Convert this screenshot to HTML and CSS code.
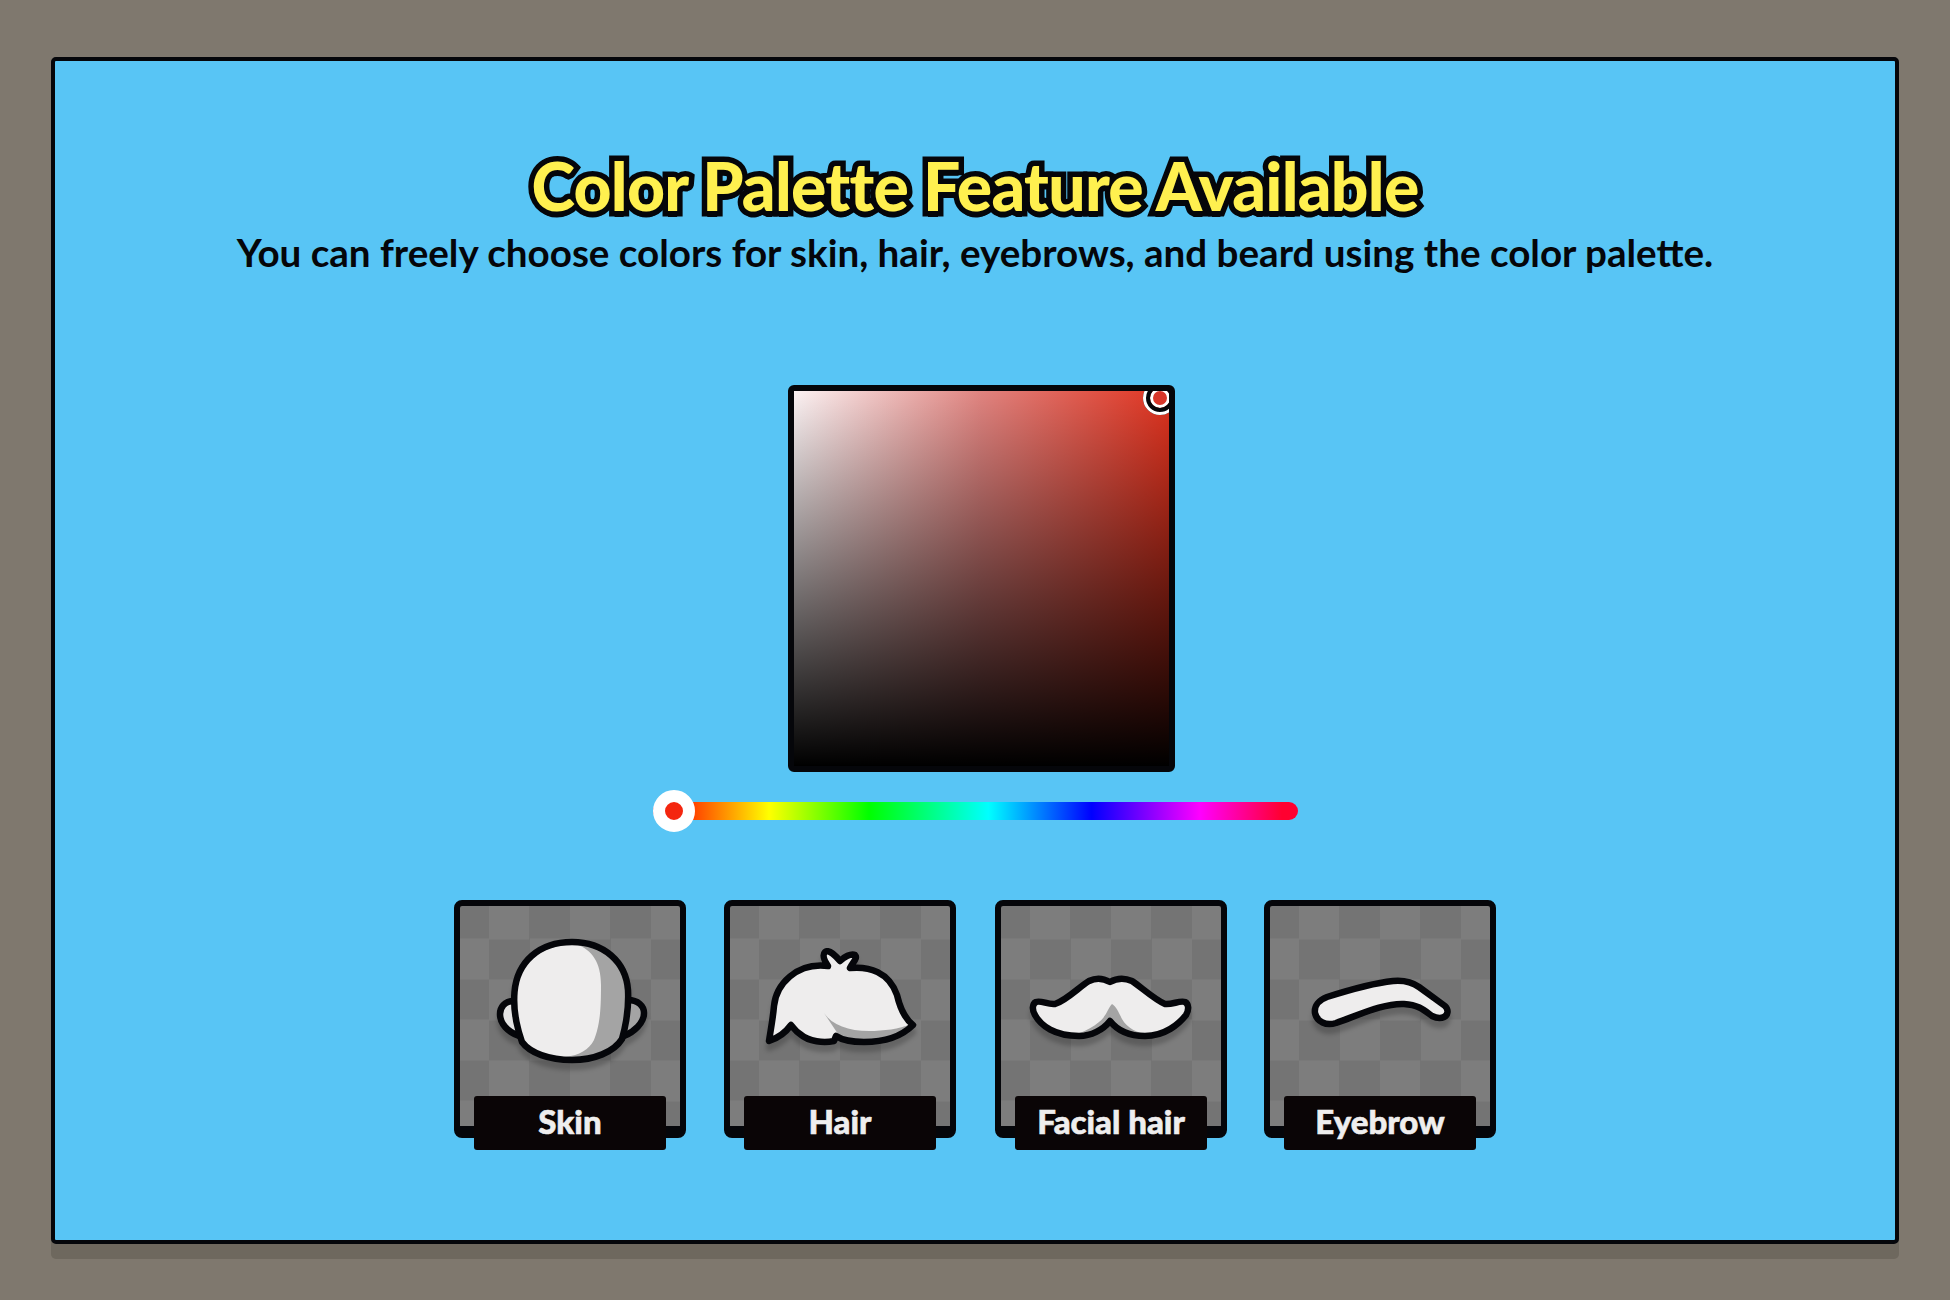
FILE: index.html
```html
<!DOCTYPE html>
<html lang="en">
<head>
  <meta charset="UTF-8">
  <title>Color Palette Feature</title>
  <meta name="viewport" content="width=device-width, initial-scale=1.0">
  <link rel="stylesheet" href="styles.css">
</head>
<body>
  <div class="frameShadow">
    <div class="frame">
      <h1 class="title">Color Palette Feature Available</h1>
      <p class="subtitle">You can freely choose colors for skin, hair, eyebrows, and beard using the color palette.</p>

      <div class="palette">
        <div class="paletteArea">
          <span class="picker"></span>
        </div>
      </div>

      <div class="hueSlider">
        <span class="hueKnob"></span>
      </div>

      <div class="cards">
        <div class="card">
          <svg class="partIcon" viewBox="6 6 220 220">
            <path class="gray earLight" d="M60 101C50 101 46 108 46 114C46 124 54 132 65 136"/>
            <path class="gray" d="M174 100C184 100 190 106 190 113C190 123 180 132 170 136"/>
            <path class="gray noLine" d="M118 42C150 42 172 62 174 90C175 110 172 125 168 139C160 152 140 160 118 160C95 160 76 153 68 142C62 125 59 110 60.5 92C63 62 85 42 118 42Z"/>
            <path class="light" d="M62 92C64 62 90 44 122 44C138 50 147 62 147 85C147 110 146 125 140 140C135 150 125 155 112 157C92 157 78 152 70 141C64 125 60 110 62 92Z"/>
            <path class="line" d="M118 42C150 42 172 62 174 90C175 110 172 125 168 139C160 152 140 160 118 160C95 160 76 153 68 142C62 125 59 110 60.5 92C63 62 85 42 118 42Z"/>
          </svg>
          <div class="cardLabel">Skin</div>
        </div>

        <div class="card">
          <svg class="partIcon" viewBox="6 6 220 220">
            <path class="light noLine" d="M104 66C100 60 98 55 101 52C105 49 112 56 116 61C120 57 127 53 131 55C134 58 129 62 126 68C145 66 165 72 173 95C176 108 180 118 189 125C178 136 160 142 140 142C128 142 118 140 112 136L110 141C100 143 85 142 76 134C72 132 70 128 67 125C62 132 54 138 45 141C47 128 49 118 50 106C52 85 72 62 104 66Z"/>
            <path class="gray noLine" d="M100 113C108 125 125 131 145 131C160 131 175 129 187 124L178 134L140 141L116 137Z"/>
            <path class="gray noLine" d="M67 121C62 129 54 135 47 139L60 136Z"/>
            <path class="line" d="M104 66C100 60 98 55 101 52C105 49 112 56 116 61C120 57 127 53 131 55C134 58 129 62 126 68C145 66 165 72 173 95C176 108 180 118 189 125C178 136 160 142 140 142C128 142 118 140 112 136L110 141C100 143 85 142 76 134C72 132 70 128 67 125C62 132 54 138 45 141C47 128 49 118 50 106C52 85 72 62 104 66Z"/>
          </svg>
          <div class="cardLabel">Hair</div>
        </div>

        <div class="card">
          <svg class="partIcon" viewBox="6 6 220 220">
            <path class="light noLine" d="M115 82C108 78 100 78 94 81C84 87 72 100 60 104C53 105 46 100 41 102C37 104 37 110 40 115C46 126 60 136 84 136C96 136 108 130 115 121C122 130 134 136 150 136C170 136 184 124 191 115C194 110 194 104 190 102C185 100 177 105 170 104C160 100 146 87 137 81C130 78 122 78 115 82Z"/>
            <path class="gray noLine" d="M117 104C113 108 111 117 104 122C98 127 92 130 85 133L105 130L115 122L126 130L155 135C142 133 132 128 127 119C124 113 121 106 117 104Z"/>
            <path class="line" d="M115 82C108 78 100 78 94 81C84 87 72 100 60 104C53 105 46 100 41 102C37 104 37 110 40 115C46 126 60 136 84 136C96 136 108 130 115 121C122 130 134 136 150 136C170 136 184 124 191 115C194 110 194 104 190 102C185 100 177 105 170 104C160 100 146 87 137 81C130 78 122 78 115 82Z"/>
          </svg>
          <div class="cardLabel">Facial hair</div>
        </div>

        <div class="card">
          <svg class="partIcon" viewBox="6 6 220 220">
            <path class="light line" d="M63 97C85 90 110 83 129 81C140 80 148 82 155 87L181 106C185 110 184 115 180 117C176 119 172 118 168 116C160 110 155 105 140 104C120 103 95 115 72 123C62 126 53 122 51 113C50 106 55 100 63 97Z"/>
          </svg>
          <div class="cardLabel">Eyebrow</div>
        </div>
      </div>
    </div>
  </div>
</body>
</html>
```

FILE: styles.css
```css
body {
  margin: 0;
  background: #7f786e;
  font-family: "Lato", "Liberation Sans", sans-serif;
}

.frameShadow {
  width: 1848px;
  margin: 57px 0 0 51px;
  padding-bottom: 15px;
  background: #6e685e;
  border-radius: 5px;
}

.frame {
  box-sizing: border-box;
  height: 1187px;
  padding-top: 85px;
  display: flex;
  flex-direction: column;
  align-items: center;
  background: #58c5f5;
  border: 4px solid #05060a;
  border-radius: 5px;
}

.title {
  margin: 0;
  font-size: 66px;
  line-height: 80px;
  font-weight: 900;
  color: #fff04f;
  letter-spacing: -0.7px;
  -webkit-text-stroke: 11px #05060a;
  paint-order: stroke fill;
  text-shadow: 0 6px 0 #05060a;
}

.subtitle {
  margin: 3px 0 0;
  font-size: 38.6px;
  line-height: 46px;
  font-weight: 700;
  color: #05060a;
}

.palette {
  box-sizing: border-box;
  width: 387px;
  height: 387px;
  margin: 110px 0 0 13px;
  border: 6px solid #05060a;
  border-radius: 6px;
}

.paletteArea {
  position: relative;
  height: 100%;
  overflow: hidden;
  background:
    linear-gradient(to top, #000, rgba(0,0,0,0)),
    linear-gradient(to right, #fbf2f3, #e0837f 50%, #e0331f);
}

.picker {
  position: absolute;
  top: -10px;
  right: -8px;
  box-sizing: border-box;
  width: 34px;
  height: 34px;
  background: #d8362a;
  border-radius: 50%;
  border: 7.5px solid #05060a;
  outline: 3px solid #fff;
  outline-offset: -3px;
  box-shadow: inset 0 0 0 3px #fff;
}

.hueSlider {
  position: relative;
  width: 645px;
  height: 18px;
  margin: 30px 0 0 1px;
  border-radius: 9px;
  background: linear-gradient(to right, #ff0000 2%, #ffff00 18%, #00ff00 33.5%, #00ffff 52%, #0000ff 68%, #ff00ff 84.8%, #ff0030 97.5%);
}

.hueKnob {
  position: absolute;
  left: 0;
  top: -12px;
  box-sizing: border-box;
  width: 42px;
  height: 42px;
  border-radius: 50%;
  background: #f4260f;
  border: 12px solid #fff;
}

.cards {
  display: flex;
  gap: 38px;
  margin: 80px 0 0;
}

.card {
  position: relative;
  box-sizing: border-box;
  width: 232px;
  height: 238px;
  border: solid #05060a;
  border-width: 6px 6px 12px;
  border-radius: 8px;
  background: repeating-conic-gradient(#747474 0 25%, #7d7d7d 0 50%) 29px -7.5px / 81px 81px;
}

.card:nth-child(3) {
  margin: 0 -1px 0 1px;
}

.partIcon {
  display: block;
  width: 220px;
  height: 220px;
  filter: drop-shadow(0 7px 2px rgba(0,0,0,0.2));
}

.partIcon path {
  stroke-linejoin: round;
  stroke-linecap: round;
}

.line {
  stroke: #05060a;
  stroke-width: 6.5;
  fill: none;
}

.gray {
  fill: #a4a4a4;
  stroke: #05060a;
  stroke-width: 6.5;
}

.gray.earLight {
  fill: #e4e4e4;
}

.light {
  fill: #eeeded;
  stroke: none;
}

.light.line {
  stroke: #05060a;
}

.noLine {
  stroke: none;
}

.cardLabel {
  position: absolute;
  left: 14px;
  bottom: -24px;
  width: 192px;
  height: 54px;
  border-radius: 3px;
  background: #0a0506;
  color: #efeeee;
  font-size: 33px;
  font-weight: 900;
  line-height: 50px;
  text-align: center;
  -webkit-text-stroke: 0.6px #efeeee;
}
```
